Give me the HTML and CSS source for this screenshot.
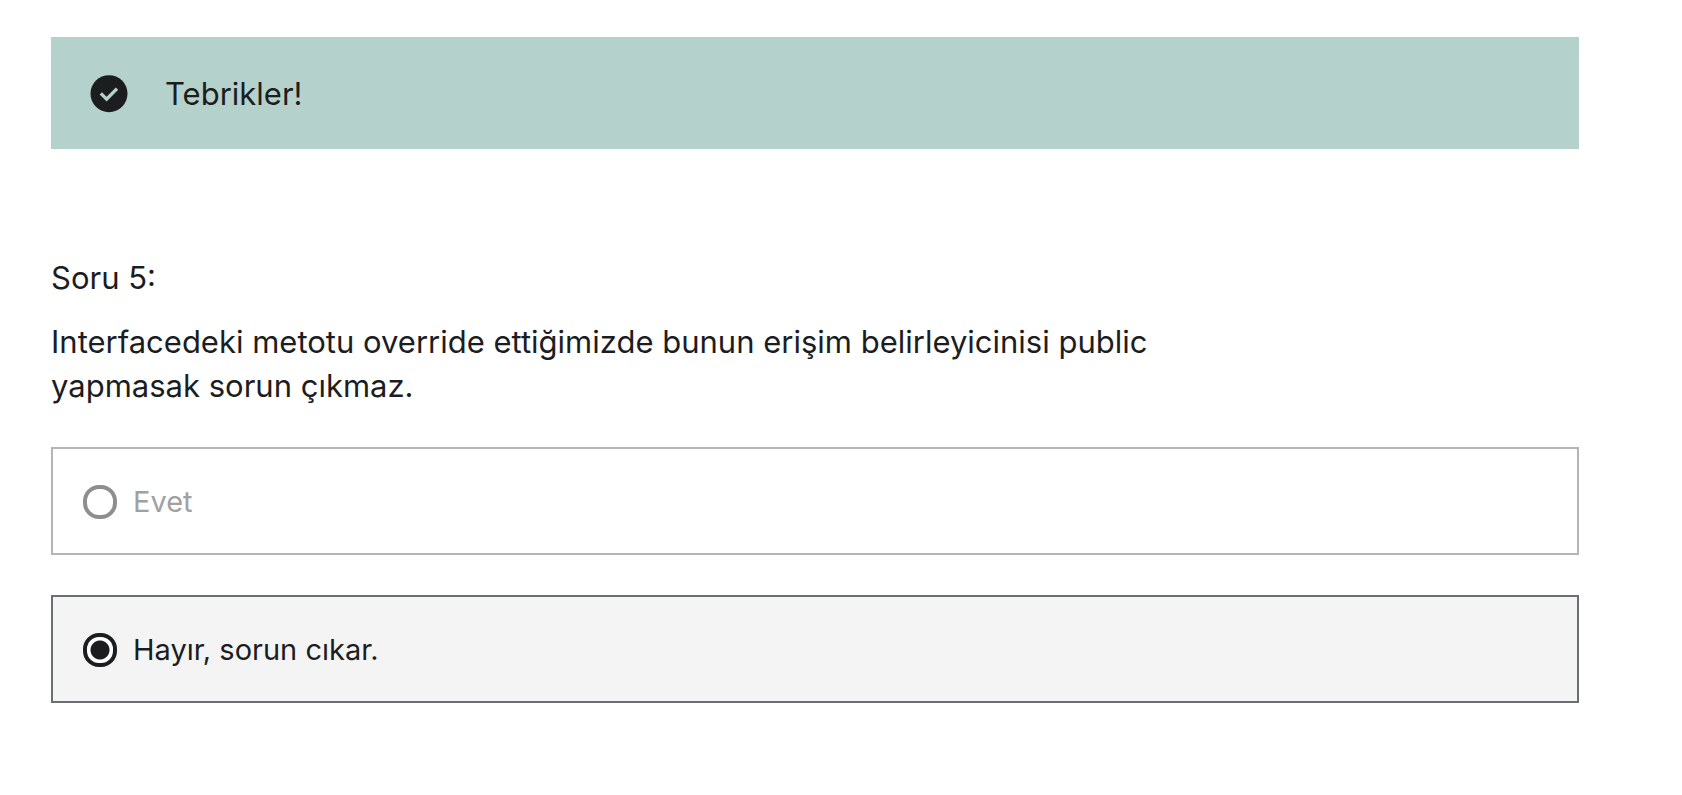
FILE: index.html
```html
<!DOCTYPE html>
<html lang="tr">
<head>
<meta charset="utf-8">
<meta name="viewport" content="width=device-width, initial-scale=1">
<title>Soru 5</title>
<link rel="stylesheet" href="styles.css">
</head>
<body>
<main class="quiz">
  <div class="alert" role="status">
    <svg class="alert-icon" viewBox="0 0 38 38" aria-hidden="true">
      <circle cx="19" cy="18.7" r="18.5" fill="#1c1d1f"/>
      <path d="M10.8 18.4L16.6 24.2L27 13.6" fill="none" stroke="#b5d1cc" stroke-width="3.4"/>
    </svg>
    <p class="alert-text">Tebrikler!</p>
  </div>
  <form class="question">
    <h1 class="question-number">Soru 5:</h1>
    <p class="question-text" id="prompt">Interfacedeki metotu override ettiğimizde bunun erişim belirleyicinisi public yapmasak sorun çıkmaz.</p>
    <div class="options" role="radiogroup" aria-labelledby="prompt">
      <label class="option option-disabled" for="answer-yes">
        <input class="radio" type="radio" name="answer" id="answer-yes" disabled>
        <span>Evet</span>
      </label>
      <label class="option option-selected" for="answer-no">
        <input class="radio" type="radio" name="answer" id="answer-no" checked>
        <span>Hayır, sorun cıkar.</span>
      </label>
    </div>
  </form>
</main>
</body>
</html>
```
FILE: styles.css
```css
* {
  box-sizing: border-box;
}

body {
  margin: 0;
  background: #fff;
  color: #1c1d1f;
  font-family: Inter, "Liberation Sans", sans-serif;
  font-size: 31px;
  font-weight: 400;
  line-height: 44px;
}

.quiz {
  padding: 37px 103px 92px 51px;
}

.alert {
  display: flex;
  align-items: center;
  gap: 37px;
  padding: 35px 39px 33px;
  background: #b5d1cc;
}

.alert-icon {
  flex: none;
  width: 38px;
  height: 38px;
}

.alert-text,
.question-number,
.question-text {
  margin: 0;
  font-size: inherit;
  font-weight: inherit;
}

.question {
  margin-top: 107px;
}

.question-text {
  max-width: 1200px;
  margin-top: 20px;
}

.options {
  display: grid;
  gap: 40px;
  margin-top: 39px;
}

.option {
  display: flex;
  align-items: center;
  gap: 16px;
  padding: 31px 30px 29px;
  border: 2px solid #6a6f73;
  font-size: 29px;
}

.option-disabled {
  border-color: #b5b5b5;
  color: #a0a1a2;
}

.option-selected {
  background: #f4f4f4;
}

.radio {
  appearance: none;
  flex: none;
  width: 34px;
  height: 34px;
  margin: 0;
  border: 4px solid #1c1d1f;
  border-radius: 16px;
  background: #fff;
}

.radio:checked {
  background: radial-gradient(circle, #1c1d1f 9px, #fff 10px);
}

.radio:disabled {
  border-color: #8e8e8e;
}
```
